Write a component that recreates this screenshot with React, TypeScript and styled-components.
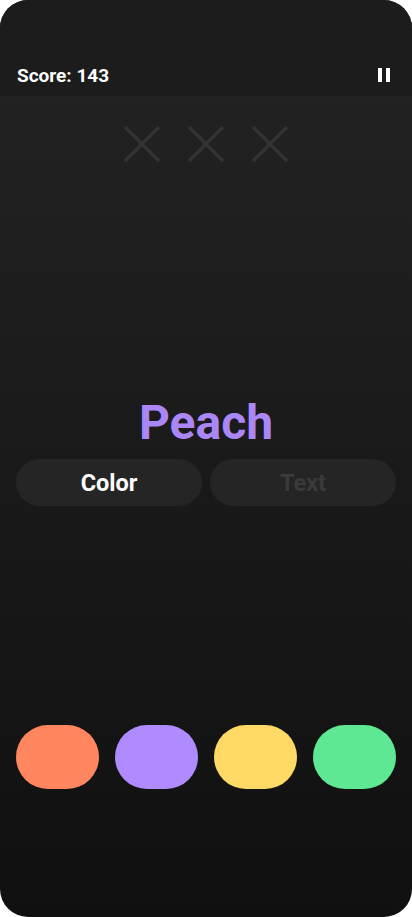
import React from "react";
import styled, { createGlobalStyle } from "styled-components";

const Global = createGlobalStyle`
  html, body { margin: 0; padding: 0; background: #ffffff; }
  body { font-family: Roboto, "Noto Sans", sans-serif; }
  * { box-sizing: border-box; }
`;

const Phone = styled.div`
  width: 412px;
  height: 917px;
  border-radius: 28px;
  overflow: hidden;
  display: flex;
  flex-direction: column;
  background: linear-gradient(180deg, #242424 0%, #101010 100%);
`;

const Header = styled.header`
  height: 96px;
  background: #1c1c1c;
  display: flex;
  align-items: flex-end;
  justify-content: space-between;
  padding: 0 22px 9px 17px;
`;

const Score = styled.div`
  color: #ffffff;
  font-weight: 700;
  font-size: 19px;
  line-height: 22px;
`;

const PauseButton = styled.div`
  display: flex;
  gap: 4px;
  height: 14px;
  margin-bottom: 5px;
`;

const PauseBar = styled.span`
  width: 4px;
  height: 14px;
  background: #ffffff;
`;

const Lives = styled.div`
  display: flex;
  justify-content: center;
  gap: 28px;
  padding-top: 30px;
`;

const Stage = styled.main`
  flex: 1;
  display: flex;
  flex-direction: column;
`;

const Word = styled.div<{ $color: string }>`
  margin-top: 233px;
  text-align: center;
  color: ${(p) => p.$color};
  font-weight: 700;
  font-size: 48px;
  line-height: 56px;
`;

const ModeRow = styled.div`
  display: flex;
  gap: 8px;
  padding: 0 16px;
  margin-top: 8px;
`;

const ModeButton = styled.div<{ $active?: boolean }>`
  flex: 1;
  height: 47px;
  border-radius: 24px;
  background: #252525;
  display: flex;
  align-items: center;
  justify-content: center;
  font-weight: 700;
  font-size: 23.5px;
  color: ${(p) => (p.$active ? "#ffffff" : "#3a3a3a")};
`;

const Swatches = styled.div`
  display: flex;
  gap: 16px;
  padding: 0 16px;
  margin-top: 219px;
`;

const Swatch = styled.div<{ $color: string }>`
  flex: 1;
  height: 64px;
  border-radius: 32px;
  background: ${(p) => p.$color};
`;

const Cross = () => (
  <svg width="36" height="36" viewBox="0 0 36 36">
    <path d="M1 1 L35 35 M35 1 L1 35" stroke="#333333" strokeWidth="3.4" fill="none" />
  </svg>
);

export default function App() {
  return (
    <>
      <Global />
      <Phone>
        <Header>
          <Score>Score: 143</Score>
          <PauseButton>
            <PauseBar />
            <PauseBar />
          </PauseButton>
        </Header>
        <Stage>
          <Lives>
            <Cross />
            <Cross />
            <Cross />
          </Lives>
          <Word $color="#ab86f7">Peach</Word>
          <ModeRow>
            <ModeButton $active>Color</ModeButton>
            <ModeButton>Text</ModeButton>
          </ModeRow>
          <Swatches>
            <Swatch $color="#ff865f" />
            <Swatch $color="#b08aff" />
            <Swatch $color="#ffd966" />
            <Swatch $color="#5fe894" />
          </Swatches>
        </Stage>
      </Phone>
    </>
  );
}
